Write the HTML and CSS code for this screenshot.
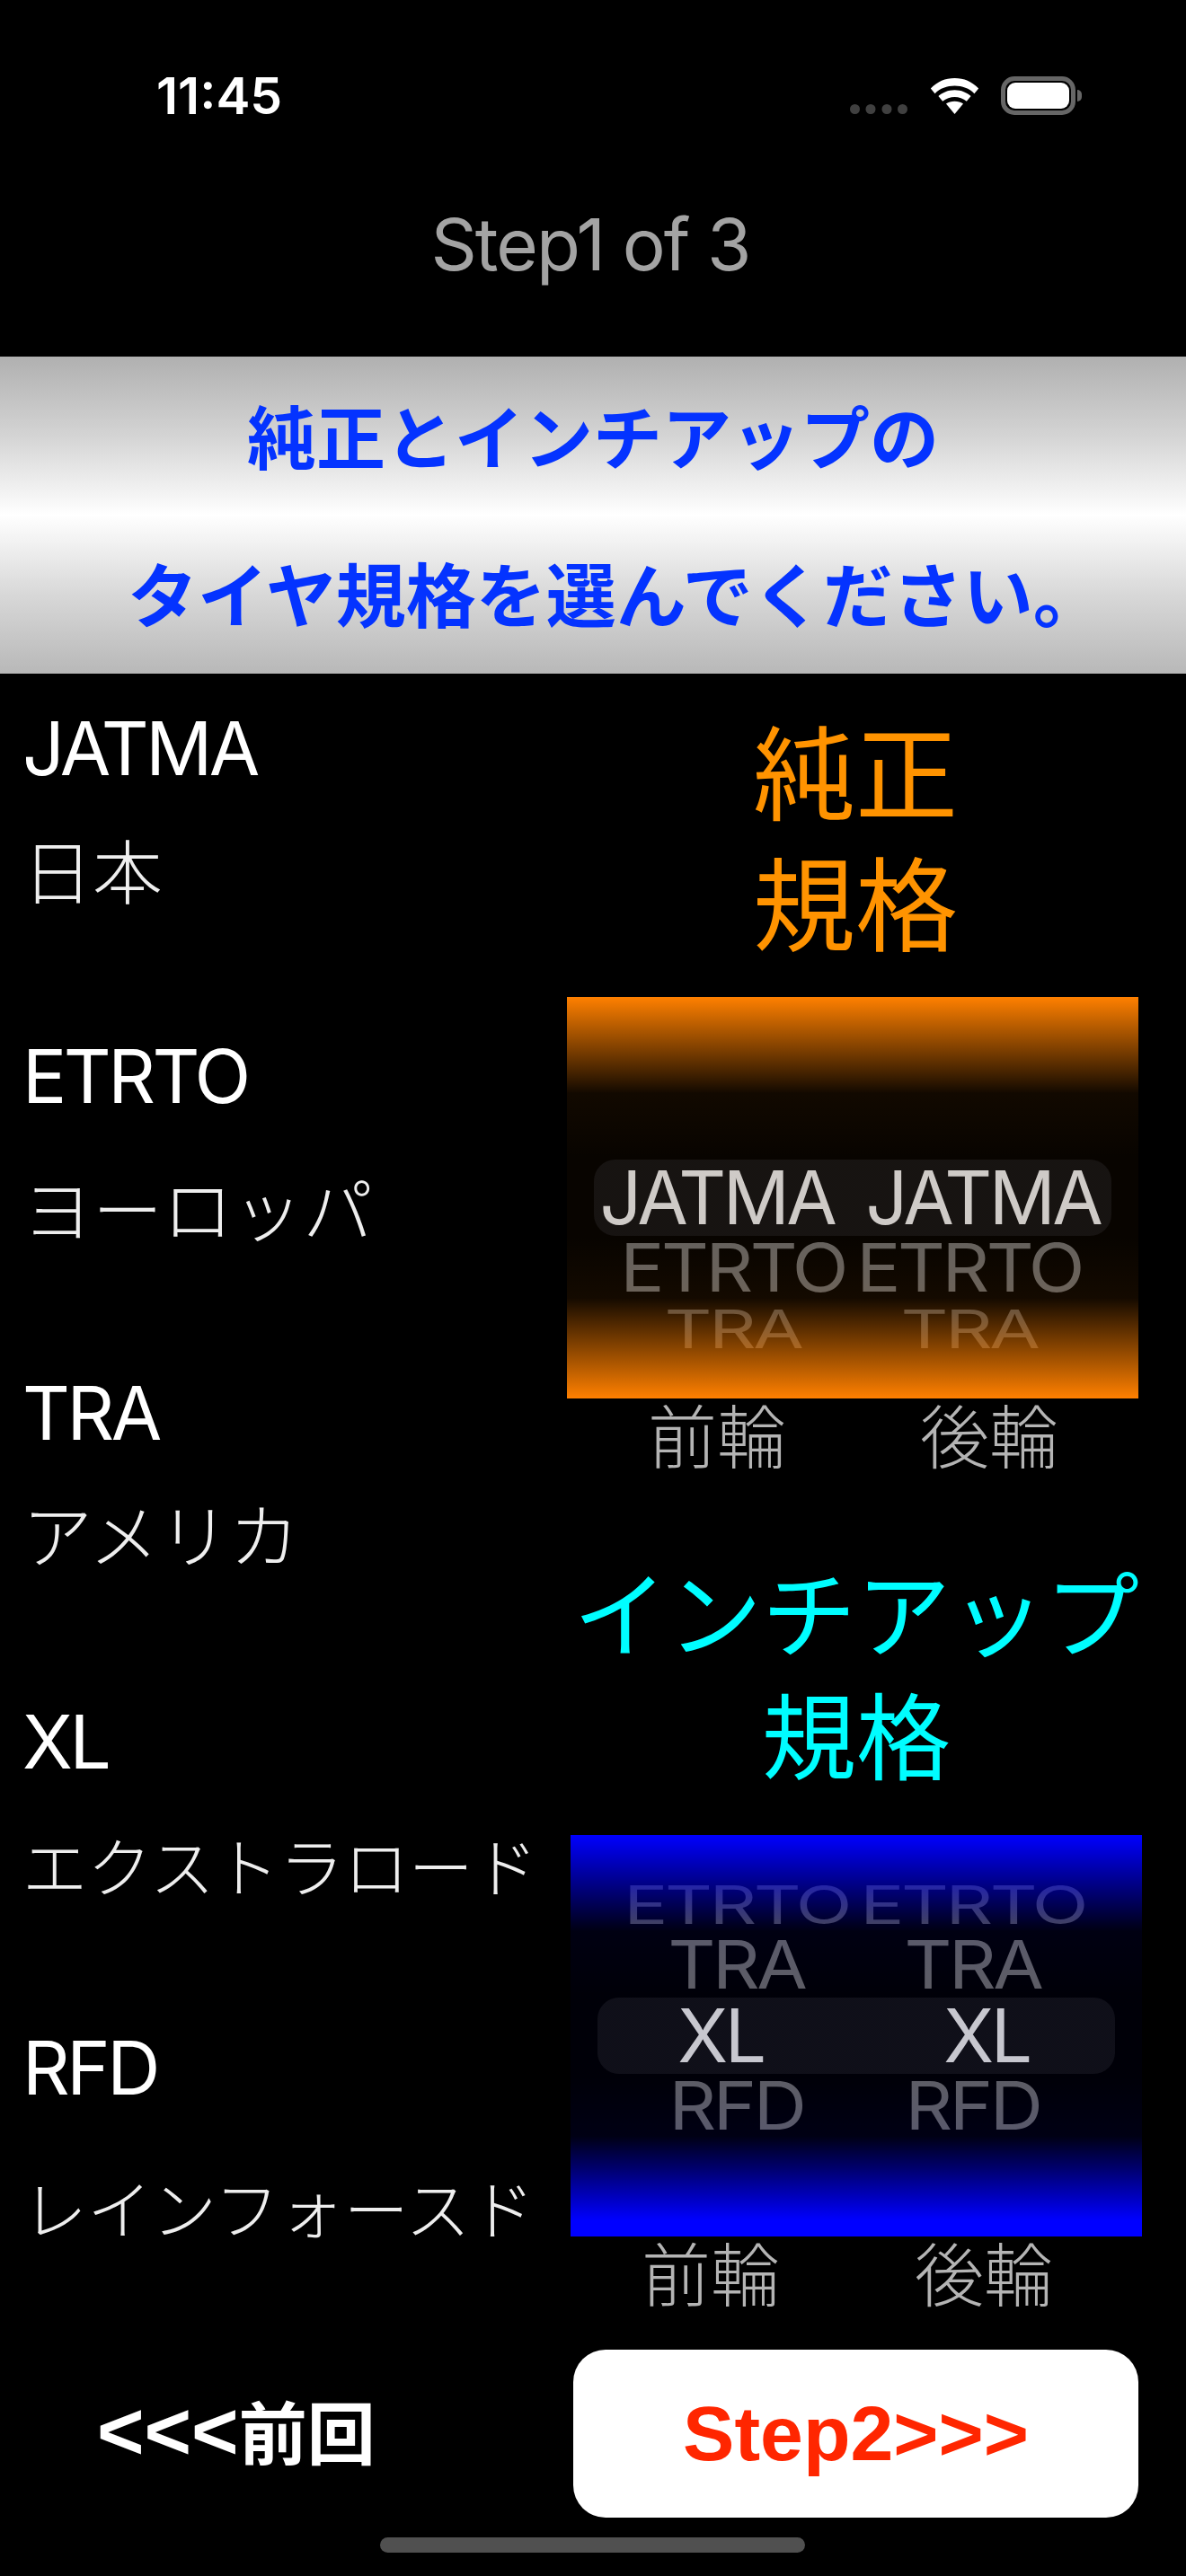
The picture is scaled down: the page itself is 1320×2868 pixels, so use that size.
FILE: index.html
```html
<!DOCTYPE html>
<html lang="ja">
<head>
    <meta charset="UTF-8">
    <meta name="viewport" content="width=device-width, initial-scale=1.0">
    <title>Step1 of 3</title>
    <link rel="stylesheet" href="styles.css">
</head>
<body>
    <div class="screen">
        <div class="statusbar">
            <span class="time">11:45</span>
            <div class="status-icons">
                <svg class="dots" width="64" height="11" viewBox="0 0 64 11">
                    <circle cx="5.5" cy="5.5" r="5.5"/><circle cx="23" cy="5.5" r="5.5"/><circle cx="41" cy="5.5" r="5.5"/><circle cx="58.5" cy="5.5" r="5.5"/>
                </svg>
                <svg class="wifi" width="55" height="40" viewBox="0 0 56 42">
                    <path d="M28 0C17 0 8 4 0 12l5 6c6-6 14-9 23-9s17 3 23 9l5-6C48 4 39 0 28 0z"/>
                    <path d="M28 14c-8 0-14 3-19 7l5 6c4-3 9-5 14-5s10 2 14 5l5-6c-5-4-11-7-19-7z"/>
                    <path d="M28 27c-4 0-7 1-10 3l10 12 10-12c-3-2-6-3-10-3z"/>
                </svg>
                <div class="battery"><div class="battery-fill"></div></div>
                <div class="battery-cap"></div>
            </div>
        </div>

        <h1 class="step-title">Step1 of 3</h1>

        <div class="banner">
            <p class="line-one">純正とインチアップの</p>
            <p class="line-two">タイヤ規格を選んでください。</p>
        </div>

        <div class="main">
            <ul class="spec-list">
                <li><b>JATMA</b><span>日本</span></li>
                <li><b>ETRTO</b><span>ヨーロッパ</span></li>
                <li><b>TRA</b><span>アメリカ</span></li>
                <li><b>XL</b><span class="fit">エクストラロード</span></li>
                <li><b>RFD</b><span class="fit">レインフォースド</span></li>
            </ul>

            <div class="pickers">
                <section class="picker-block oem">
                    <h2>純正<br>規格</h2>
                    <div class="wheel">
                        <div class="wheel-select"></div>
                        <div class="wheel-rows">
                            <div class="row selected"><span>JATMA</span><span>JATMA</span></div>
                            <div class="row near"><span>ETRTO</span><span>ETRTO</span></div>
                            <div class="row far"><span>TRA</span><span>TRA</span></div>
                        </div>
                        <div class="wheel-fade"></div>
                    </div>
                    <div class="axles"><span>前輪</span><span>後輪</span></div>
                </section>

                <section class="picker-block inch">
                    <h2>インチアップ<br>規格</h2>
                    <div class="wheel">
                        <div class="wheel-select"></div>
                        <div class="wheel-rows">
                            <div class="row far"><span>ETRTO</span><span>ETRTO</span></div>
                            <div class="row near"><span>TRA</span><span>TRA</span></div>
                            <div class="row selected"><span>XL</span><span>XL</span></div>
                            <div class="row near"><span>RFD</span><span>RFD</span></div>
                        </div>
                        <div class="wheel-fade"></div>
                    </div>
                    <div class="axles"><span>前輪</span><span>後輪</span></div>
                </section>
            </div>
        </div>

        <div class="nav">
            <button class="btn-back">&lt;&lt;&lt;<span class="kanji">前回</span></button>
            <button class="btn-next">Step2&gt;&gt;&gt;</button>
        </div>
        <div class="home-bar"></div>
    </div>
</body>
</html>
```

FILE: styles.css
```css
* { box-sizing: border-box; }
html, body { margin: 0; padding: 0; background: #000; }
body { font-family: Inter, "Noto Sans CJK JP", sans-serif; color: #fff; }
.screen { width: 1320px; height: 2868px; display: flex; flex-direction: column; overflow: hidden; }

.statusbar { height: 150px; padding: 76px 116px 0 174px; display: flex; justify-content: space-between; align-items: flex-start; }
.time { font-family: Inter, sans-serif; font-size: 57px; font-weight: 600; line-height: 62px; }
.status-icons { display: flex; align-items: flex-end; height: 43px; margin-top: 9px; }
.dots { fill: #404040; margin: 0 25px 1px 0; }
.wifi { fill: #fff; margin: 0 24px 1px 0; }
.battery { width: 83px; height: 43px; border: 5px solid #666; border-radius: 15px; padding: 2px; }
.battery-fill { width: 100%; height: 100%; background: #fff; border-radius: 9px; }
.battery-cap { width: 5px; height: 13px; background: #666; border-radius: 0 7px 7px 0; margin: 0 0 15px 2px; }

.step-title { height: 247px; margin: 0; padding: 67px 6px 0 0; text-align: center; font-size: 80px; font-weight: 400; line-height: 110px; letter-spacing: -1.9px; color: #a3a3a3; }

.banner { height: 353px; padding-top: 3px; background: linear-gradient(#b0b0b0, #d4d4d4 25%, #fff 50%, #d8d8d8 75%, #b8b8b8); text-align: center; color: #0433ff; font-weight: 700; }
.banner p { margin: 0; height: 176px; line-height: 178px; }
.line-one { font-size: 77px; }
.line-two { font-size: 78px; padding-left: 50px; }

.main { display: flex; height: 1866px; }
.spec-list { list-style: none; margin: 0; padding: 0 0 0 25px; width: 631px; flex-shrink: 0; }
.spec-list li { display: flex; flex-direction: column; }
.spec-list b { font-weight: 400; font-size: 82px; letter-spacing: -3.5px; line-height: 92px; }
.spec-list span { font-family: "Noto Sans CJK JP", sans-serif; font-weight: 300; font-size: 78px; line-height: 90px; white-space: nowrap; color: #eee; }
.spec-list .fit { font-size: 72px; }

/* the rows are not evenly spaced in the app */
.spec-list li:nth-child(1) b { margin-top: 38px; }
.spec-list li:nth-child(2) b { margin-top: 141px; }
.spec-list li:nth-child(3) b { margin-top: 140px; }
.spec-list li:nth-child(4) b { margin-top: 143px; }
.spec-list li:nth-child(5) b { margin-top: 137px; }
.spec-list li:nth-child(1) span { margin-top: 42px; }
.spec-list li:nth-child(2) span { margin-top: 53px; }
.spec-list li:nth-child(3) span { margin-top: 41px; }
.spec-list li:nth-child(4) span { margin-top: 44px; }
.spec-list li:nth-child(5) span { margin-top: 62px; }

.pickers { flex: 1; }
.picker-block h2 { margin: 0; text-align: center; font-family: "Noto Sans CJK JP", sans-serif; font-weight: 400; }
.oem { width: 636px; }
.oem h2 { color: #ff9300; font-size: 114px; line-height: 146px; padding: 32px 0 0 6px; height: 360px; }
.inch { width: 636px; margin-left: 4px; padding-top: 70px; }
.inch h2 { color: #00fdff; font-size: 105px; line-height: 136px; height: 330px; padding-top: 10px; }

.wheel { position: relative; height: 447px; overflow: hidden; }
.oem .wheel { --edge: 255, 128, 0; --full: 100%; }
.inch .wheel { --edge: 0, 0, 255; --full: 96%; }
.wheel-select { position: absolute; left: 30px; right: 30px; top: 181px; height: 85px; border-radius: 24px; background: #101012; }
.wheel-rows { position: absolute; left: 0; right: 0; top: 181px; }
.inch .wheel-rows { top: 47px; }
.row { display: flex; font-size: 82px; letter-spacing: -3.5px; white-space: nowrap; }
.row span { width: 263px; text-align: center; }
.row span:first-child { margin-left: 53px; }
.selected { height: 85px; line-height: 85px; color: #cdcdcd; }
.selected span:first-child { margin-left: 36px; width: 262px; }
.selected span:last-child { width: 330px; }
.near { height: 72px; line-height: 72px; color: #606060; transform: scaleY(0.91); }
.far { height: 63px; line-height: 63px; color: #4a4a4a; transform: scaleY(0.72); }
.inch .far { height: 62px; line-height: 62px; }

.wheel-fade { position: absolute; inset: 0; background: linear-gradient(rgb(var(--edge)), rgba(var(--edge), 0.07) 24%, rgba(var(--edge), 0.03) 40%, rgba(var(--edge), 0.03) 60%, rgba(var(--edge), 0.08) 75%, rgb(var(--edge)) var(--full)); }

.axles { display: flex; margin-top: -8px; color: #b4b4b4; font-family: "Noto Sans CJK JP", sans-serif; font-weight: 300; font-size: 77px; line-height: 94px; }
.axles span { width: 160px; text-align: center; white-space: nowrap; }
.axles span:first-child { margin-left: 87px; }
.axles span:last-child { margin-left: 143px; }
.inch .axles span:first-child { margin-left: 76px; }
.inch .axles span:last-child { margin-left: 144px; }

.nav { height: 187px; display: flex; align-items: center; }
.nav button { border: 0; background: none; padding: 0; font-family: "Liberation Sans", "Noto Sans CJK JP", sans-serif; font-weight: 700; }
.nav .btn-back { color: #fff; font-size: 90px; line-height: 100px; margin-left: 108px; width: 330px; text-align: left; white-space: nowrap; }
.kanji { font-size: 76px; }
.nav .btn-next { color: #ff2600; font-size: 86px; background: #fff; width: 629px; height: 187px; margin-left: 200px; border-radius: 36px; }
.home-bar { width: 473px; height: 17px; background: #505050; border-radius: 9px; margin: 22px 0 0 423px; }
```
